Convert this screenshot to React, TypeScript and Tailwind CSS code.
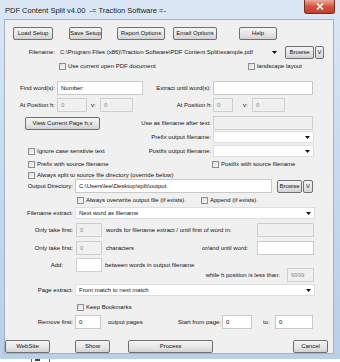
import React from "react";

const font = "font-['Tahoma','Liberation_Sans',sans-serif]";

function Btn({ className = "", children }: { className?: string; children: React.ReactNode }) {
  return (
    <div
      className={`flex h-[13px] shrink-0 items-center justify-center rounded-[2px] border border-[#707070] bg-linear-to-b from-[#f4f4f4] via-[#e8e8e8] to-[#d3d3d3] text-[6px] text-[#111] ${className}`}
    >
      {children}
    </div>
  );
}

function Input({ className = "", value = "", disabled = false }: { className?: string; value?: string; disabled?: boolean }) {
  return (
    <div
      className={`flex h-[14px] shrink-0 items-center border px-[3px] text-[6px] ${
        disabled ? "border-[#cfcfcf] bg-[#f0f0f0] text-[#8a8a8a]" : "border-[#c9c9c9] bg-white text-[#111]"
      } ${className}`}
    >
      {value}
    </div>
  );
}

function Select({ className = "", value = "", plain = false }: { className?: string; value?: string; plain?: boolean }) {
  return (
    <div
      className={`flex h-[12px] shrink-0 items-center justify-between pl-[3px] pr-[3px] text-[6px] text-[#111] ${
        plain ? "bg-[#f0f0f0]" : "border border-[#dedede] bg-white"
      } ${className}`}
    >
      <span className="truncate">{value}</span>
      <svg width="5" height="3" viewBox="0 0 5 3" className="shrink-0">
        <path d="M0 0h5L2.5 3z" fill="#111" />
      </svg>
    </div>
  );
}

function Check({ label, className = "" }: { label: string; className?: string }) {
  return (
    <div className={`flex shrink-0 items-center gap-[2px] text-[6px] text-[#111] ${className}`}>
      <span className="h-[7px] w-[7px] shrink-0 border border-[#8e8f8f] bg-linear-to-br from-[#dcdcdc] to-[#fbfbfb]" />
      <span>{label}</span>
    </div>
  );
}

function Label({ className = "", children }: { className?: string; children: React.ReactNode }) {
  return <div className={`shrink-0 text-right text-[6px] text-[#111] ${className}`}>{children}</div>;
}

export default function App() {
  return (
    <div className={`h-[362px] w-[340px] overflow-hidden whitespace-nowrap bg-white ${font}`}>
      {/* window frame */}
      <div className="flex h-[359px] w-[340px] flex-col bg-linear-to-b from-[#dbe7f4] via-[#c6d9ee] to-[#b9d0e8] pl-[4px] pr-[6px] pb-[5px]">
        {/* title bar */}
        <div className="flex h-[19px] shrink-0 items-start justify-between">
          <span className="mt-[5px] ml-[1px] text-[7.5px] text-[#1e1e1e]">PDF Content Split v4.00&nbsp;&nbsp;-= Traction Software =-</span>
          <div className="mr-[-1px] flex h-[14px] w-[31px] items-center justify-center rounded-b-[3px] border border-t-0 border-[#7a2a22] bg-linear-to-b from-[#e9a99c] via-[#d2533f] to-[#c4402d]">
            <svg width="8" height="7" viewBox="0 0 8 7">
              <path d="M1 0.5l6 6M7 0.5l-6 6" stroke="white" strokeWidth="1.6" />
            </svg>
          </div>
        </div>

        {/* client area */}
        <div className="flex flex-1 flex-col border border-[#9fb3cb] bg-[#f0f0f0]">
          {/* top buttons */}
          <div className="mt-[7px] flex">
            <Btn className="ml-[8px] w-[40px] border-[#3c7fb1]">Load Setup</Btn>
            <Btn className="ml-[16px] w-[33px]">Save Setup</Btn>
            <Btn className="ml-[15px] w-[48px]">Report Options</Btn>
            <Btn className="ml-[8px] w-[44px]">Email Options</Btn>
            <Btn className="ml-[22px] w-[38px]">Help</Btn>
          </div>

          {/* filename */}
          <div className="mt-[5px] flex h-[14px] items-center">
            <Label className="w-[50px]">Filename:</Label>
            <Select
              plain
              className="ml-[2px] h-[14px] w-[223px]"
              value="C:\Program Files (x86)\Traction Software\PDF Content Split\example.pdf"
            />
            <Btn className="ml-[5px] h-[12px] w-[29px]">Browse</Btn>
            <Btn className="ml-[1px] h-[12px] w-[9px]">V</Btn>
          </div>

          <div className="mt-[3px] flex h-[8px] items-center">
            <Check className="ml-[54px] w-[189px]" label="Use current open PDF document" />
            <Check label="landscape layout" />
          </div>

          {/* find words */}
          <div className="mt-[11px] flex h-[14px] items-center">
            <Label className="w-[50px]">Find word(s):</Label>
            <Input className="ml-[2px] w-[86px]" value="Number:" />
            <Label className="w-[68px]">Extract until word(s):</Label>
            <Input className="ml-[2px] w-[100px]" />
          </div>

          <div className="mt-[3px] flex h-[14px] items-center">
            <Label className="w-[50px]">At Position h:</Label>
            <Input disabled className="ml-[2px] w-[30px]" value="0" />
            <div className="w-[13px] pl-[4px] text-[6px] text-[#111]">v:</div>
            <Input disabled className="w-[33px]" value="0" />
            <Label className="w-[79px]">At Position h:</Label>
            <Input disabled className="ml-[1px] w-[20px]" value="0" />
            <div className="w-[19px] pl-[10px] text-[6px] text-[#111]">v:</div>
            <Input disabled className="w-[33px]" value="0" />
          </div>

          <div className="mt-[4px] flex h-[14px] items-center">
            <Btn className="ml-[20px] w-[75px]">View Current Page h,v</Btn>
            <Label className="w-[111px]">Use as filename after text:</Label>
            <Input disabled className="ml-[2px] w-[100px]" />
          </div>

          <div className="mt-[1px] flex h-[12px] items-center">
            <Label className="w-[206px]">Prefix output filename:</Label>
            <Select className="ml-[2px] w-[101px]" />
          </div>

          <div className="mt-[2px] flex h-[12px] items-center">
            <Check className="ml-[23px] w-[105px]" label="Ignore case senstivie text" />
            <Label className="w-[78px]">Postfix output filename:</Label>
            <Select className="ml-[2px] w-[101px]" />
          </div>

          <div className="mt-[3px] flex h-[8px] items-center">
            <Check className="ml-[23px] w-[184px]" label="Prefix with source filename" />
            <Check label="Postfix with source filename" />
          </div>

          <div className="mt-[3px] flex h-[8px] items-center">
            <Check className="ml-[23px]" label="Always split to source file directory (override below)" />
          </div>

          {/* output directory */}
          <div className="mt-[0px] flex h-[14px] items-center">
            <Label className="w-[68px]">Output Directory:</Label>
            <Input className="ml-[2px] w-[197px]" value="C:\Users\lee\Desktop\split\output" />
            <Btn className="ml-[5px] h-[12px] w-[25px]">Browse</Btn>
            <Btn className="ml-[1px] h-[12px] w-[10px]">V</Btn>
          </div>

          <div className="mt-[3px] flex h-[8px] items-center">
            <Check className="ml-[72px] w-[124px]" label="Always overwrite output file (if exists)" />
            <Check label="Append (if exists)" />
          </div>

          <div className="mt-[3px] flex h-[12px] items-center">
            <Label className="w-[68px]">Filename extract:</Label>
            <Select className="ml-[2px] w-[240px]" value="Next word as filename" />
          </div>

          <div className="mt-[4px] flex h-[14px] items-center">
            <Label className="w-[68px]">Only take first:</Label>
            <Input disabled className="ml-[3px] w-[26px]" value="0" />
            <div className="ml-[4px] w-[151px] text-[6px] text-[#111]">words for filename extract / until first of word in:</div>
            <Input disabled className="w-[57px]" />
          </div>

          <div className="mt-[4px] flex h-[14px] items-center">
            <Label className="w-[68px]">Only take first:</Label>
            <Input disabled className="ml-[3px] w-[26px]" value="0" />
            <div className="ml-[4px] flex w-[142px] justify-between text-[6px] text-[#111]">
              <span>characters</span>
              <span>or/and until word:</span>
            </div>
            <Input className="ml-[9px] w-[57px]" />
          </div>

          {/* add + while h position */}
          <div className="mt-[3px] flex h-[25px]">
            <div className="flex h-[14px] items-center">
              <Label className="w-[58px]">Add:</Label>
              <Input className="ml-[13px] w-[26px] border-[#cfcfcf] bg-[#f0f0f0]" />
              <div className="ml-[3px] text-[6px] text-[#111]">between words in output filename</div>
            </div>
            <div className="mt-[10px] ml-auto mr-[19px] flex h-[14px] items-center">
              <div className="mr-[7px] text-[6px] text-[#111]">while h position is less than:</div>
              <Input disabled className="w-[27px] text-[5.5px]" value="9999" />
            </div>
          </div>

          <div className="mt-[1px] flex h-[12px] items-center">
            <Label className="w-[68px]">Page extract:</Label>
            <Select className="ml-[2px] w-[240px]" value="From match to next match" />
          </div>

          <div className="mt-[7px] flex h-[8px] items-center">
            <Check className="ml-[72px]" label="Keep Bookmarks" />
          </div>

          <div className="mt-[4px] flex h-[14px] items-center">
            <Label className="w-[68px]">Remove first:</Label>
            <Input className="ml-[2px] w-[26px]" value="0" />
            <div className="ml-[7px] w-[69px] text-[6px] text-[#111]">output pages</div>
            <Label className="w-[44px]">Start from page:</Label>
            <Input className="ml-[1px] w-[30px]" value="0" />
            <div className="w-[23px] pl-[11px] text-[6px] text-[#111]">to:</div>
            <Input className="w-[38px]" value="0" />
          </div>

          {/* bottom buttons */}
          <div className="mt-[11px] flex">
            <Btn className="w-[45px]">WebSite</Btn>
            <Btn className="ml-[25px] w-[35px]">Show</Btn>
            <Btn className="ml-[18px] w-[85px]">Process</Btn>
            <Btn className="ml-[80px] w-[35px]">Cancel</Btn>
          </div>
        </div>
      </div>
      {/* bits of whatever lies under the window */}
      <div className="ml-[31px] flex h-[3px] items-start gap-[3px]">
        <span className="h-[3px] w-[1px] bg-[#d33]" />
        <span className="h-[2px] w-[5px] bg-[#444]" />
        <span className="ml-[6px] h-[3px] w-[1px] bg-[#d33]" />
      </div>
    </div>
  );
}
